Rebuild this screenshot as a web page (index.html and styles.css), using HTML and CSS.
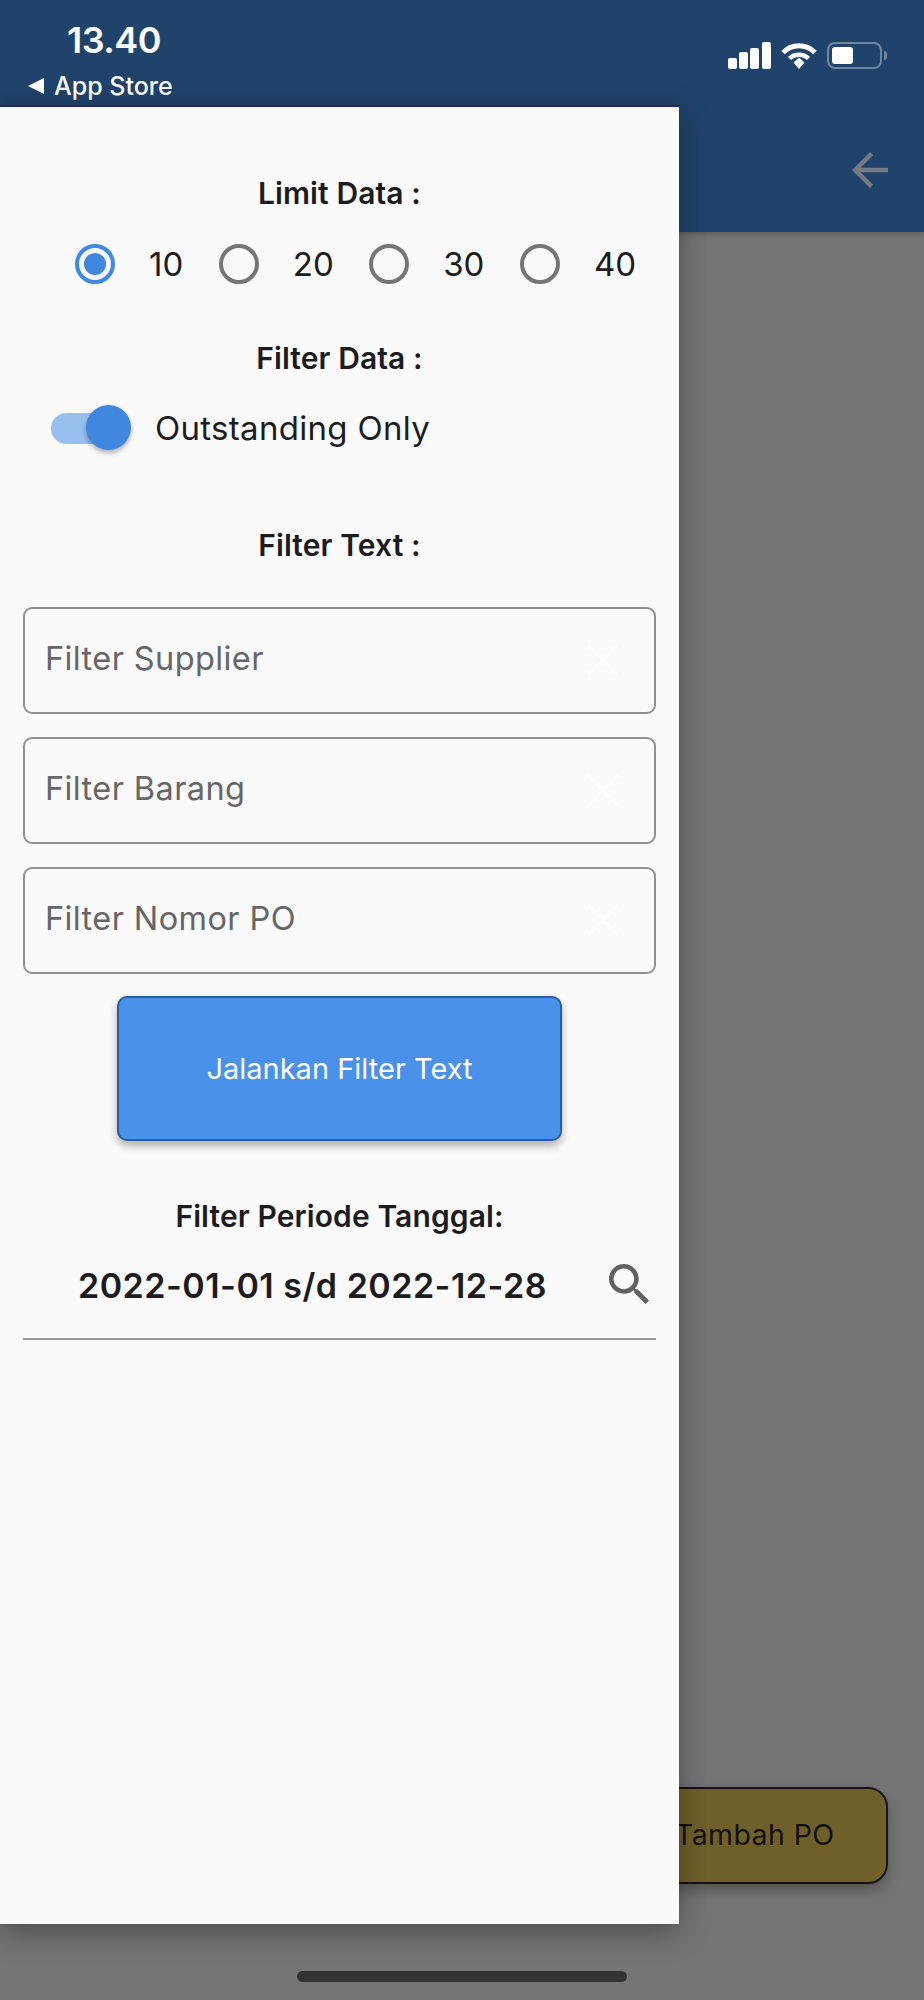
FILE: index.html
```html
<!DOCTYPE html>
<html lang="en">
<head>
  <meta charset="UTF-8">
  <title>Filter PO</title>
  <link rel="stylesheet" href="styles.css">
</head>
<body>
  <div class="page">
    <header class="app-bar">
      <div class="status-left">
        <div class="clock">13.40</div>
        <div class="back-app"><span class="back-tri"></span>App Store</div>
      </div>
      <div class="status-right">
        <div class="signal">
          <span class="bar bar1"></span>
          <span class="bar bar2"></span>
          <span class="bar bar3"></span>
          <span class="bar bar4"></span>
        </div>
        <svg class="wifi" viewBox="0 0 36 27">
          <path d="M2 10.5C11 1.5 25 1.5 34 10.5" fill="none" stroke="#fff" stroke-width="5"/>
          <path d="M8.5 16.5C13.5 11.5 22.500 11.500 27.500 16.500" fill="none" stroke="#fff" stroke-width="4.500"/>
          <path d="M12.500 20.500L18 15.500L23.500 20.500L18 27z" fill="#fff"/>
        </svg>
        <div class="battery"><span class="battery-level"></span></div>
        <span class="battery-nub"></span>
      </div>
      <svg class="back-arrow" viewBox="4 4 16 16">
        <path d="M20 11H7.830l5.590-5.590L12 4l-8 8 8 8 1.410-1.410L7.830 13H20v-2z" fill="#757a80"/>
      </svg>
    </header>

    <div class="fab">Tambah PO</div>
    <div class="home-bar"></div>

    <aside class="drawer">
      <div class="heading first">Limit Data :</div>
      <div class="radio-row">
        <div class="radio-item"><span class="radio active"></span><span>10</span></div>
        <div class="radio-item"><span class="radio"></span><span>20</span></div>
        <div class="radio-item"><span class="radio"></span><span>30</span></div>
        <div class="radio-item"><span class="radio"></span><span>40</span></div>
      </div>

      <div class="heading filter-data">Filter Data :</div>
      <div class="switch-row">
        <div class="switch"><span class="switch-thumb"></span></div>
        <span>Outstanding Only</span>
      </div>

      <div class="heading filter-text">Filter Text :</div>
      <div class="fields">
        <div class="field">
          <span class="field-label">Filter Supplier</span>
          <svg class="clear" viewBox="5 5 14 14"><path d="M19 5.900L18.100 5 12 11.100 5.900 5 5 5.900 11.100 12 5 18.100 5.900 19 12 12.900 18.100 19 19 18.100 12.900 12z"/></svg>
        </div>
        <div class="field">
          <span class="field-label">Filter Barang</span>
          <svg class="clear" viewBox="5 5 14 14"><path d="M19 5.900L18.100 5 12 11.100 5.900 5 5 5.900 11.100 12 5 18.100 5.900 19 12 12.900 18.100 19 19 18.100 12.900 12z"/></svg>
        </div>
        <div class="field">
          <span class="field-label">Filter Nomor PO</span>
          <svg class="clear" viewBox="5 5 14 14"><path d="M19 5.900L18.100 5 12 11.100 5.900 5 5 5.900 11.100 12 5 18.100 5.900 19 12 12.900 18.100 19 19 18.100 12.900 12z"/></svg>
        </div>
      </div>
      <button class="run-btn">Jalankan Filter Text</button>

      <div class="heading periode">Filter Periode Tanggal:</div>
      <div class="date-row">
        <span class="date-text">2022-01-01 s/d 2022-12-28</span>
        <svg class="search" viewBox="3 3 17.500 17.500">
          <path d="M15.500 14h-.790l-.280-.270C15.410 12.590 16 11.110 16 9.500 16 5.910 13.090 3 9.500 3S3 5.910 3 9.500 5.910 16 9.500 16c1.610 0 3.090-.590 4.230-1.570l.270.280v.790l5 4.990L20.490 19l-4.990-5zm-6 0C7.010 14 5 11.990 5 9.500S7.010 5 9.500 5 14 7.010 14 9.500 11.990 14 9.500 14z" fill="#616161"/>
        </svg>
      </div>
    </aside>
  </div>
</body>
</html>
```

FILE: styles.css
```css
:root {
  --navy: #20436b;
  --scrim: #757575;
  --blue: #4187e0;
  --text: #1c1c1e;
}

body {
  margin: 0;
  font-family: 'Inter', 'Liberation Sans', sans-serif;
  color: var(--text);
}

.page {
  position: relative;
  width: 924px;
  height: 2000px;
  overflow: hidden;
  background: var(--scrim);
}

.app-bar {
  position: relative;
  height: 232px;
  background: var(--navy);
  box-shadow: 0 3px 6px rgba(0, 0, 0, 0.18);
  color: white;
}

.status-left {
  position: absolute;
  top: 20px;
  left: 28px;
}

.clock {
  margin-left: 39px;
  font-size: 36px;
  line-height: 40px;
  font-weight: 600;
  letter-spacing: -0.5px;
}

.back-app {
  display: flex;
  align-items: center;
  gap: 10px;
  margin-top: 6px;
  font-size: 25px;
  line-height: 40px;
  font-weight: 500;
}

.back-tri {
  width: 0;
  height: 0;
  border-top: 8px solid transparent;
  border-bottom: 8px solid transparent;
  border-right: 16px solid white;
}

.status-right {
  position: absolute;
  top: 42px;
  left: 728px;
  display: flex;
  align-items: flex-start;
}

.signal {
  display: flex;
  align-items: flex-end;
  gap: 2.200px;
  height: 27px;
}

.bar {
  width: 9px;
  background: white;
  border-radius: 2px;
}

.bar1 { height: 11px; }
.bar2 { height: 17px; }
.bar3 { height: 21px; }
.bar4 { height: 27px; }

.wifi {
  width: 36px;
  height: 27px;
  margin-left: 10px;
}

.battery {
  box-sizing: border-box;
  width: 55px;
  height: 27px;
  margin-left: 10px;
  padding: 3px;
  border: 2px solid #6f86a0;
  border-radius: 8px;
}

.battery-level {
  display: block;
  width: 21px;
  height: 17px;
  background: white;
  border-radius: 3px;
}

.battery-nub {
  width: 3px;
  height: 9px;
  margin: 9px 0 0 2px;
  background: #6f86a0;
  border-radius: 0 3px 3px 0;
}

.back-arrow {
  position: absolute;
  top: 152px;
  left: 852px;
  width: 36px;
  height: 36px;
}

.fab {
  position: absolute;
  top: 1787px;
  left: 560px;
  box-sizing: border-box;
  width: 328px;
  height: 97px;
  padding: 0 0 2px 113px;
  display: flex;
  align-items: center;
  background: #6f6029;
  border: 2px solid #141414;
  border-radius: 20px;
  box-shadow: 0 6px 14px rgba(0, 0, 0, 0.3);
  font-size: 28.500px;
  letter-spacing: 0.4px;
  color: #111;
}

.home-bar {
  position: absolute;
  top: 1971px;
  left: 297px;
  width: 330px;
  height: 11px;
  background: #333;
  border-radius: 6px;
}

.drawer {
  position: absolute;
  top: 105px;
  left: 0;
  box-sizing: border-box;
  width: 679px;
  height: 1819px;
  padding: 0 23px;
  background: #fafafa;
  border-top: 2px solid #1b2a66;
  box-shadow: 0 8px 28px rgba(0, 0, 0, 0.35);
  font-size: 33px;
}

.heading {
  text-align: center;
  font-size: 30px;
  line-height: 30px;
  font-weight: 600;
  letter-spacing: 0.1px;
}

.heading.first { margin-top: 71px; }
.heading.filter-data { margin-top: 59px; }
.heading.filter-text { margin-top: 79px; }
.heading.periode { margin-top: 60px; }

.radio-row {
  display: flex;
  gap: 35.500px;
  margin-top: 36px;
  padding-left: 52px;
  line-height: 40px;
}

.radio-item {
  display: flex;
  align-items: center;
  gap: 34px;
}

.radio {
  box-sizing: border-box;
  width: 40px;
  height: 40px;
  border: 4.500px solid #757575;
  border-radius: 50%;
}

.radio.active {
  border-color: #3f8ae6;
  background: var(--blue);
  background-clip: content-box;
  padding: 5px;
}

.switch-row {
  display: flex;
  align-items: center;
  gap: 24px;
  height: 46px;
  margin-top: 32px;
  padding-left: 28px;
  letter-spacing: 0.3px;
}

.switch {
  position: relative;
  width: 80px;
  height: 46px;
}

.switch::before {
  content: "";
  display: block;
  width: 64px;
  height: 31px;
  margin-top: 8px;
  background: #98bfed;
  border-radius: 16px;
}

.switch-thumb {
  position: absolute;
  top: 0;
  right: 0;
  width: 45px;
  height: 45px;
  background: var(--blue);
  border-radius: 50%;
  box-shadow: 0 3px 5px rgba(0, 0, 0, 0.3);
}

.fields {
  display: flex;
  flex-direction: column;
  gap: 23px;
  margin-top: 47px;
}

.field {
  box-sizing: border-box;
  height: 107px;
  display: flex;
  align-items: center;
  justify-content: space-between;
  padding: 0 35px 0 20px;
  border: 2px solid #919191;
  border-radius: 9px;
  color: #666;
  font-size: 32.500px;
  letter-spacing: 0.4px;
}

.field-label {
  margin-bottom: 4px;
}

.clear {
  width: 32px;
  height: 32px;
  margin-bottom: 2px;
  fill: white;
}

.run-btn {
  display: block;
  box-sizing: border-box;
  width: 445px;
  height: 145px;
  margin: 22px 0 0 94px;
  background: #4991ea;
  border: 2px solid #2a5f9f;
  border-radius: 10px;
  box-shadow: 0 5px 9px rgba(0, 0, 0, 0.3);
  font-family: inherit;
  font-size: 29px;
  color: white;
}

.date-row {
  display: flex;
  align-items: center;
  box-sizing: border-box;
  height: 95px;
  margin-top: 14px;
  padding: 0 7px 15px 55px;
  justify-content: space-between;
  border-bottom: 2px solid #999;
}

.date-text {
  margin-top: 2px;
  font-size: 34px;
  font-weight: 600;
  letter-spacing: 0.5px;
}

.search {
  width: 40px;
  height: 40px;
}
```
